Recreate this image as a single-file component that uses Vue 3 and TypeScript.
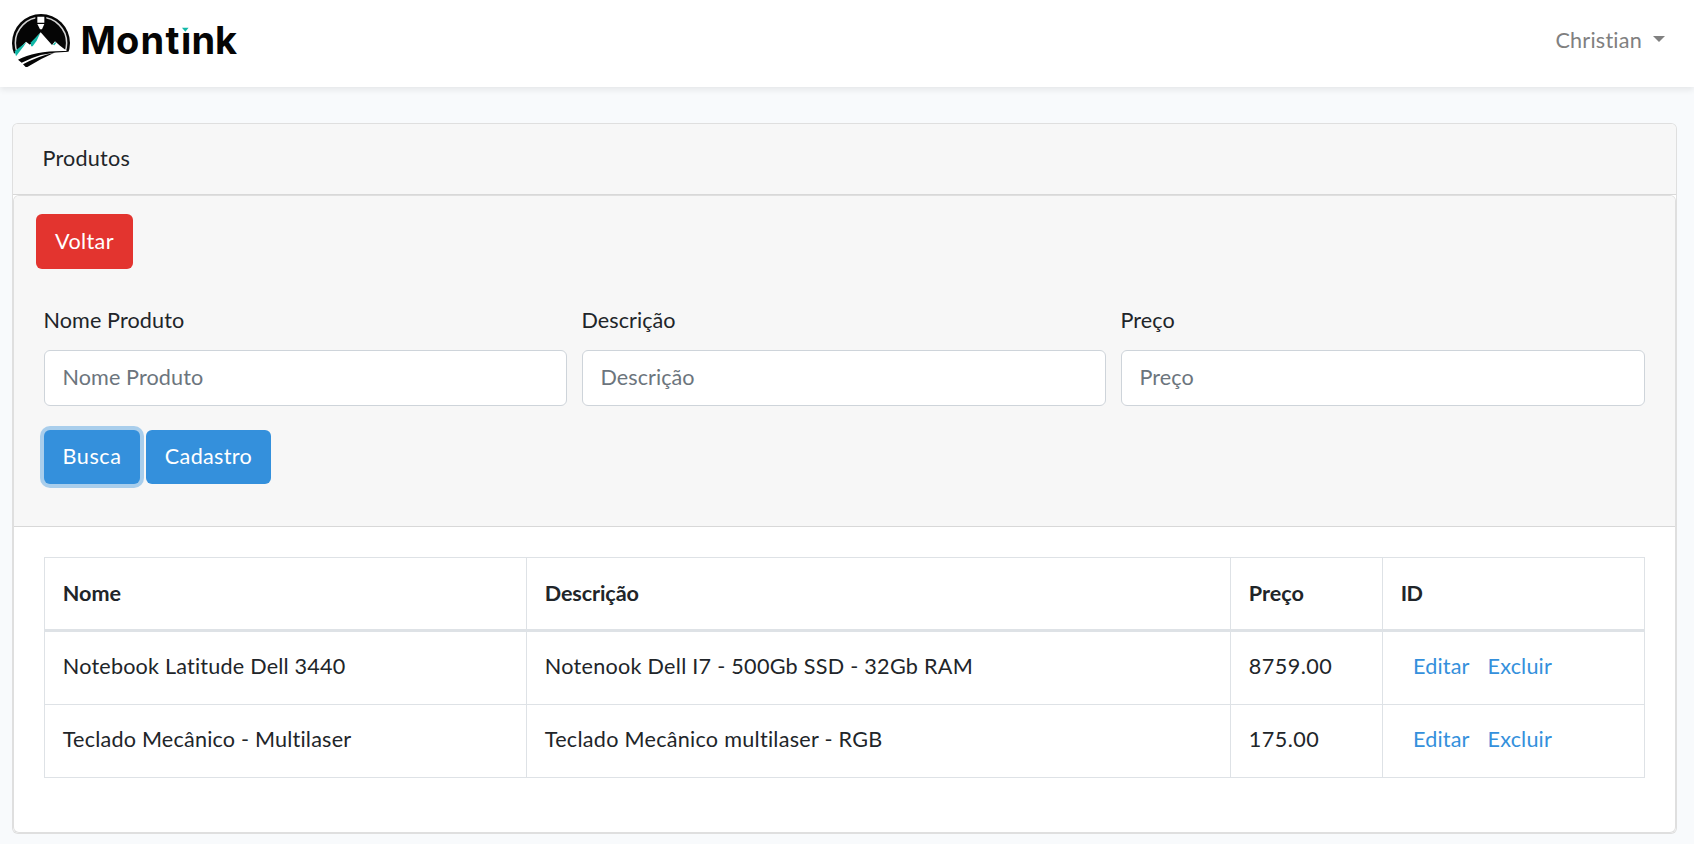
<script setup lang="ts">
import { ref } from 'vue'

interface Product {
  id: number
  name: string
  description: string
  price: string
}

interface Field {
  key: string
  label: string
}

const user = ref('Christian')

const fields: Field[] = [
  { key: 'nome', label: 'Nome Produto' },
  { key: 'descricao', label: 'Descrição' },
  { key: 'preco', label: 'Preço' },
]

const products = ref<Product[]>([
  { id: 1, name: 'Notebook Latitude Dell 3440', description: 'Notenook Dell I7 - 500Gb SSD - 32Gb RAM', price: '8759.00' },
  { id: 2, name: 'Teclado Mecânico - Multilaser', description: 'Teclado Mecânico multilaser - RGB', price: '175.00' },
])
</script>

<template>
  <div class="page">
    <nav class="navbar">
      <a class="brand" href="#" aria-label="Montink">
        <svg class="logo" width="250" height="80" viewBox="0 0 250 80">
          <g transform="translate(5 5) scale(0.33333)">
            <circle cx="108" cy="114" r="87" fill="#050505" />
            <circle cx="108" cy="114" r="77" fill="none" stroke="#d4d4d4" stroke-width="4.5" />
            <path d="M91 31H124V60L112 80H104L91 60Z" fill="#050505" />
            <path d="M97 35H118V53H97Z M97 57H118L111 73H105Z" fill="#fff" />
            <path d="M12 170L26 148L63 110L75 119L107 82L141 120L150 109L165 122L187 139L204 143V210H12Z" fill="#fff" />
            <path d="M65 110L29 139L33 154L56 124Z" fill="#12b8a8" />
            <path d="M106 83L78 112V124H83L95 107Z" fill="#12b8a8" />
            <path d="M151 110L144 119L148 121L153 115Z" fill="#12b8a8" />
            <path d="M39 164Q90 136 187 138L191 140Q112 140 50 173Z" fill="#050505" />
            <path d="M54 178Q98 153 148 143Q104 162 67 186H62Z" fill="#050505" />
          </g>
          <text class="wordmark" x="80.6 116 140.4 165.6 180.9 191.4 215.1" y="54.4">Montink</text>
          <rect x="180" y="24" width="11" height="9" fill="#fff" />
          <path d="M182 27.8H188.6L185.3 31.8Z" fill="#12b8a8" />
        </svg>
      </a>
      <a class="user" href="#"><span>{{ user }}</span><i class="caret"></i></a>
    </nav>

    <main class="content">
      <section class="card">
        <header class="card-title">Produtos</header>
        <div class="card inner">
          <div class="filters">
            <button class="btn danger" type="button">Voltar</button>
            <form class="form" @submit.prevent>
              <div class="fields">
                <div v-for="f in fields" :key="f.key" class="field" :class="f.key">
                  <label :for="f.key">{{ f.label }}</label>
                  <input :id="f.key" type="text" :placeholder="f.label" />
                </div>
              </div>
              <div class="actions">
                <button class="btn primary search active" type="submit">Busca</button>
                <button class="btn primary create" type="button">Cadastro</button>
              </div>
            </form>
          </div>
          <div class="list">
            <div class="table">
              <div class="row head">
                <div class="cell h-name">Nome</div>
                <div class="cell h-desc">Descrição</div>
                <div class="cell">Preço</div>
                <div class="cell h-id">ID</div>
              </div>
              <div v-for="p in products" :key="p.id" class="row">
                <div class="cell name">{{ p.name }}</div>
                <div class="cell desc">{{ p.description }}</div>
                <div class="cell price">{{ p.price }}</div>
                <div class="cell links"><a class="edit" href="#">Editar</a><a class="remove" href="#">Excluir</a></div>
              </div>
            </div>
          </div>
        </div>
      </section>
    </main>
  </div>
</template>

<style>
body {
  margin: 0;
  background: #f8fafc;
}
</style>

<style scoped>
.page {
  box-sizing: border-box;
  height: 844px;
  overflow: hidden;
  background: #f8fafc;
  color: #212529;
  font-family: Lato, "Open Sans", sans-serif;
  font-size: 21.6px;
  font-variant-ligatures: none;
}
.page *,
.page *::before {
  box-sizing: border-box;
}
a {
  text-decoration: none;
  color: #3490dc;
}
.navbar {
  position: relative;
  display: flex;
  justify-content: space-between;
  height: 87px;
  padding-right: 29px;
  background: #fff;
  box-shadow: 0 3px 6px rgba(0, 0, 0, 0.075);
}
.brand,
.logo {
  display: block;
}
.wordmark {
  font: 700 38px Inter, sans-serif;
  fill: #050505;
}
.user {
  display: flex;
  align-items: center;
  gap: 11px;
  height: 79px;
  color: #808080;
  letter-spacing: 0.22px;
}
.caret {
  margin-bottom: 1px;
  border: 6px solid transparent;
  border-top-color: #808080;
  border-bottom: 0;
}
.content {
  padding: 36px 17px 0 12px;
}
.card {
  border: 1px solid rgba(0, 0, 0, 0.125);
  border-radius: 6px;
  background: #fff;
}
.card-title {
  display: flex;
  align-items: center;
  height: 71px;
  padding: 0 29px 2px 29.5px;
  border-bottom: 1px solid rgba(0, 0, 0, 0.125);
  border-radius: 5px 5px 0 0;
  background: #f7f7f7;
  letter-spacing: 0.2px;
}
.inner {
  height: 638px;
}
.filters {
  height: 331px;
  padding: 18px 22px 0;
  border-bottom: 1px solid rgba(0, 0, 0, 0.125);
  border-radius: 5px 5px 0 0;
  background: #f7f7f7;
}
.btn {
  display: flex;
  align-items: center;
  justify-content: center;
  height: 54px;
  padding: 0 0 2px;
  border: 0;
  border-radius: 6px;
  color: #fff;
  font: inherit;
}
.danger {
  width: 97px;
  height: 55px;
  background: #e3342f;
  letter-spacing: 0.38px;
}
.primary {
  background: #3490dc;
}
.search {
  width: 96px;
  letter-spacing: 0.6px;
}
.create {
  width: 125px;
  letter-spacing: 0.33px;
}
.active {
  box-shadow: 0 0 0 4px rgba(52, 144, 220, 0.4);
}
.form {
  padding: 33px 8px 0;
}
.fields {
  display: grid;
  grid-template-columns: 523px 524px 1fr;
  gap: 15px;
}
.field {
  display: flex;
  flex-direction: column;
  gap: 13px;
  letter-spacing: 0.05px;
}
.field.nome {
  letter-spacing: 0.1px;
}
label {
  margin-left: -0.5px;
  padding-top: 1px;
  line-height: 34px;
}
input {
  width: 100%;
  height: 56px;
  padding: 0 18px 2px 17.5px;
  border: 1px solid #ced4da;
  border-radius: 6px;
  outline: 0;
  background: #fff;
  color: #495057;
  font: inherit;
  letter-spacing: inherit;
}
input::placeholder {
  color: #6c757d;
  opacity: 1;
}
.actions {
  display: flex;
  gap: 6px;
  margin-top: 24px;
}
.list {
  padding: 30px;
}
.table {
  border-top: 1px solid #dee2e6;
  border-left: 1px solid #dee2e6;
}
.row {
  display: grid;
  grid-template-columns: 482px 704px 152px 262px;
  height: 73px;
}
.row.head {
  height: 74px;
  font-weight: 700;
}
.cell {
  display: flex;
  align-items: center;
  padding: 0 18px 4px 17.8px;
  border-right: 1px solid #dee2e6;
  border-bottom: 1px solid #dee2e6;
}
.head .cell {
  padding-bottom: 2px;
  border-bottom-width: 3px;
}
.h-name {
  letter-spacing: 0;
}
.h-desc {
  letter-spacing: -0.12px;
}
.h-id {
  letter-spacing: -0.7px;
}
.name {
  letter-spacing: 0.2px;
}
.desc {
  letter-spacing: 0.27px;
}
.price {
  letter-spacing: 0.45px;
}
.links {
  gap: 18px;
  padding-left: 30px;
  letter-spacing: 0.16px;
}
</style>
